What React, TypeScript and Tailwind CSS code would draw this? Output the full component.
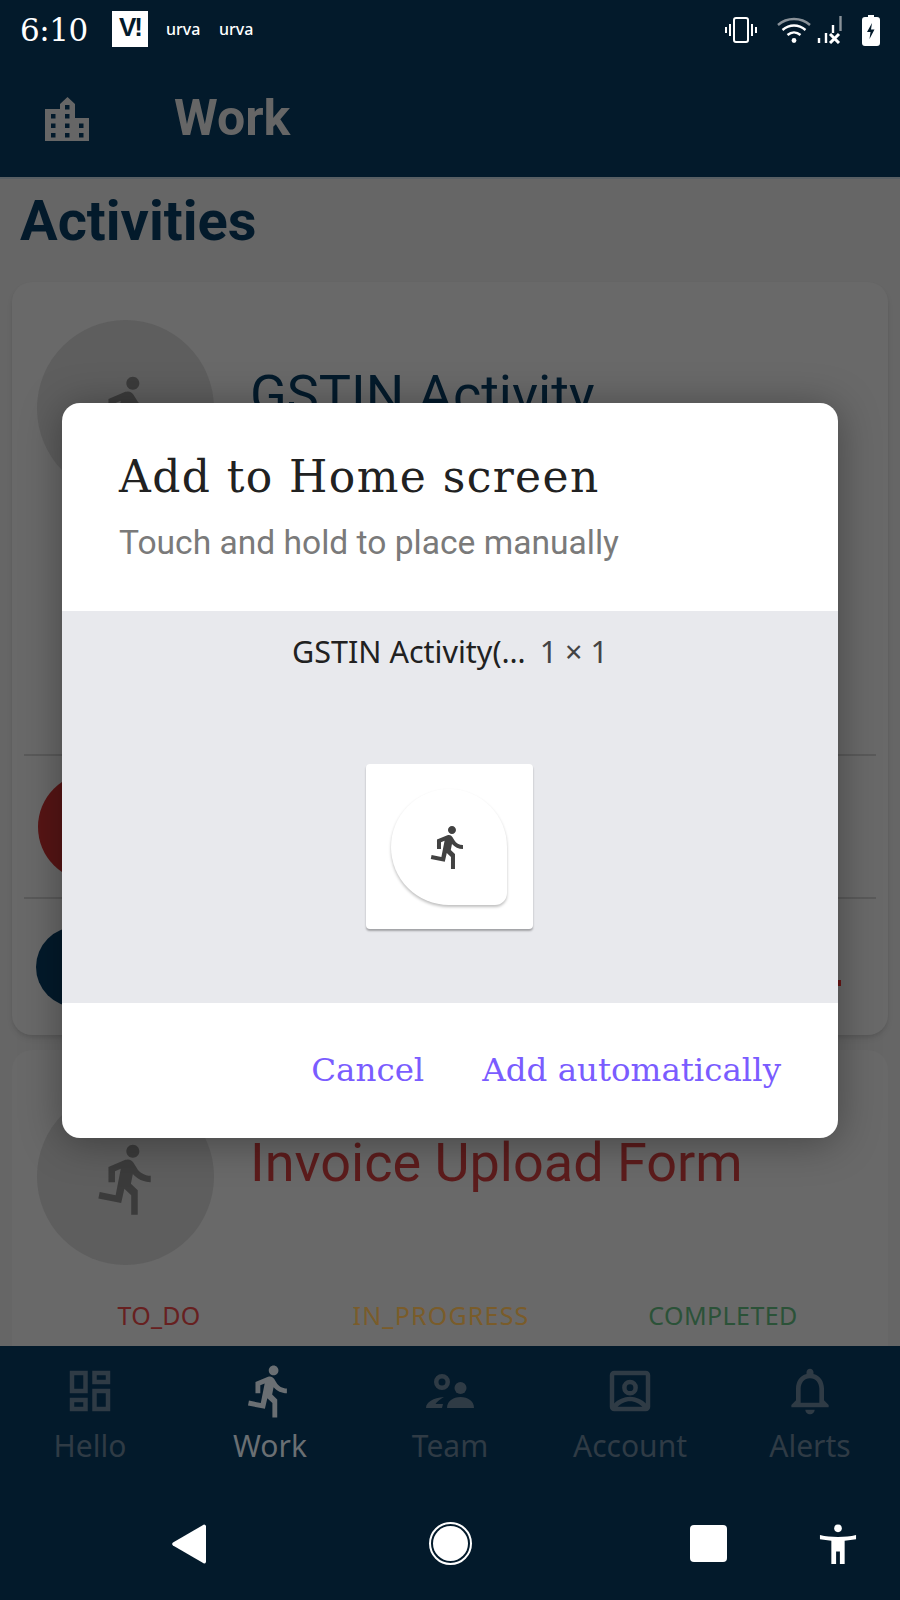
const RUN_PATH =
  "M13.49 5.48c1.1 0 2-.9 2-2s-.9-2-2-2-2 .9-2 2 .9 2 2 2zm-3.6 13.9l1-4.4 2.1 2v6h2v-7.5l-2.1-2 .6-3c1.3 1.5 3.3 2.5 5.5 2.5v-2c-1.9 0-3.5-1-4.3-2.4l-1-1.6c-.4-.6-1-1-1.7-1-.3 0-.5.1-.8.1l-5.2 2.2v4.7h2v-3.4l1.8-.7-1.6 8.1-4.9-1-.4 2 7 1.4z";

function RunIcon({ className }: { className: string }) {
  return (
    <svg viewBox="0 0 24 24" fill="currentColor" className={className}>
      <path d={RUN_PATH} />
    </svg>
  );
}

function BuildingIcon() {
  return (
    <svg viewBox="0 0 44 44" className="w-[44px] h-[44px] text-[#666]" fill="currentColor">
      <path
        fillRule="evenodd"
        d="M22.500 0L30 7v14h14v23H0V12h15V7zM20 8v4.500h4.500V8zM6 17v4.500h4.500V17zm14 0v4.500h4.500V17zM6 26.500V31h4.500v-4.500zm14 0V31h4.500v-4.500zm14 0V31h4.500v-4.500zM6 36v4.500h4.500V36zm14 0v4.500h4.500V36zm14 0v4.500h4.500V36z"
      />
    </svg>
  );
}

function StatusIcons() {
  return (
    <div className="flex items-center text-white">
      {/* vibrate */}
      <svg viewBox="0 0 32 26" className="w-[32px] h-[26px]" fill="none" stroke="currentColor" strokeWidth="2">
        <rect x="9" y="1" width="14" height="24" rx="2" />
        <path d="M5 7v12M1 10v6M27 7v12M31 10v6" />
      </svg>
      {/* wifi */}
      <svg viewBox="0 0 34 26" className="ml-[20px] w-[34px] h-[26px]" fill="none" stroke="currentColor" strokeWidth="2.4">
        <path d="M1 8C10 0 24 0 33 8" stroke="#8a9299" />
        <path d="M5.5 13c7-6 16-6 23 0M10.5 18c4-3.500 9-3.500 13 0" />
        <circle cx="17" cy="23.500" r="2.400" fill="currentColor" stroke="none" />
      </svg>
      {/* signal, no data */}
      <svg viewBox="0 0 26 28" className="ml-[6px] w-[26px] h-[28px]" fill="none" strokeWidth="2.400">
        <path d="M2 22v5M9 17v10M16 9v8" stroke="#fff" />
        <path d="M23.500 0v15" stroke="#8a9299" />
        <path d="M13 18l9 9M22 18l-9 9" stroke="#fff" strokeWidth="3" />
      </svg>
      {/* battery */}
      <svg viewBox="0 0 18 31" className="ml-[19px] w-[18px] h-[31px]">
        <path d="M6 0h6v2h3a3 3 0 0 1 3 3v23a3 3 0 0 1-3 3H3a3 3 0 0 1-3-3V5a3 3 0 0 1 3-3h3z" fill="#fff" />
        <path d="M10 8l-5 9h3.500l-1 7 5-9.500H9z" fill="#031a2b" />
      </svg>
    </div>
  );
}

function StatusBar() {
  return (
    <div className="h-[60px] pl-[20px] pr-[20px] flex items-center justify-between">
      <div className="flex items-center">
        <span className="w-[72px] text-[31px] leading-none text-white font-['DejaVu_Serif',serif] tracking-[-0.5px]">6:10</span>
        <div className="ml-[20px] mt-[-2px] w-[36px] h-[36px] bg-white flex items-start justify-center pt-[5px]">
          <span className="text-[26px] leading-[22px] font-bold text-[#031a2b] font-['Liberation_Sans',sans-serif] tracking-[-2px]">V!</span>
        </div>
        <span className="ml-[18px] mt-[-2px] w-[53px] text-[16px] leading-none font-medium text-white font-['Noto_Sans',sans-serif]">urva</span>
        <span className="mt-[-2px] text-[16px] leading-none font-medium text-white font-['Noto_Sans',sans-serif]">urva</span>
      </div>
      <StatusIcons />
    </div>
  );
}

function Stat({ label, className }: { label: string; className: string }) {
  return <span className={"text-[25px] font-['Noto_Sans',sans-serif] " + className}>{label}</span>;
}

function BackgroundCards() {
  return (
    <div className="flex-1 min-h-0 overflow-hidden bg-[#666] border-t-2 border-[#585f64]">
      <h2 className="pl-[20px] pt-[11px] h-[103px] text-[56px] leading-[62px] font-bold text-[#031a2b] font-['Roboto',sans-serif]">
        Activities
      </h2>
      <div className="mx-[12px] h-[753px] rounded-[20px] bg-[#696969] shadow-md">
        <div className="h-[472px] pt-[38px] pl-[25px] flex">
          <div className="w-[177px] h-[177px] rounded-full bg-[#5e5e5e] flex items-center justify-center">
            <RunIcon className="w-[78px] h-[78px] ml-[4px] mt-[4px] text-[#3b3b3b]" />
          </div>
          <p className="ml-[36px] mt-[37px] text-[54px] leading-[76px] text-[#031a2b] font-['Roboto',sans-serif]">GSTIN Activity</p>
        </div>
        <div className="mx-[12px] h-[143px] border-t-2 border-b-0 border-[#5a5a5a] flex items-center">
          <div className="ml-[14px] w-[108px] h-[108px] rounded-full bg-[#571515]" />
        </div>
        <div className="mx-[12px] h-[138px] border-t-2 border-[#5a5a5a] flex items-center justify-between">
          <div className="w-[80px] h-[80px] rounded-full bg-[#031a2b] ml-[12px]" />
          <div className="w-[3px] h-[6px] bg-[#6b1515] mr-[35px] mt-[32px]" />
        </div>
      </div>
      <div className="mt-[15px] mx-[12px] h-[400px] rounded-t-[20px] bg-[#696969]">
        <div className="pt-[38px] pl-[25px] flex">
          <div className="w-[177px] h-[177px] rounded-full bg-[#5e5e5e] flex items-center justify-center">
            <RunIcon className="w-[78px] h-[78px] ml-[4px] mt-[4px] text-[#3b3b3b]" />
          </div>
          <p className="ml-[36px] mt-[37px] text-[54px] leading-[76px] text-[#5c1c1c] font-['Roboto',sans-serif]">Invoice Upload Form</p>
        </div>
        <div className="mt-[32px] grid grid-cols-3 pl-[6px] pr-[24px] text-center">
          <Stat label="TO_DO" className="tracking-[0.2px] text-[#672020]" />
          <Stat label="IN_PROGRESS" className="tracking-[1.2px] text-[#7a5c2a]" />
          <Stat label="COMPLETED" className="tracking-[0.4px] text-[#2b5238]" />
        </div>
      </div>
    </div>
  );
}

function NavItem({ label, active, children }: { label: string; active?: boolean; children: React.ReactNode }) {
  return (
    <div className={"flex flex-col items-center " + (active ? "text-[#6a6f73]" : "text-[#2f3b45]")}>
      <div className="h-[56px] flex items-center justify-center">{children}</div>
      <span className="mt-[7px] text-[30px] leading-[40px] font-['Noto_Sans',sans-serif]">{label}</span>
    </div>
  );
}

function BottomNav() {
  return (
    <div className="h-[254px] pt-[17px]">
      <div className="grid grid-cols-5">
        <NavItem label="Hello">
          <svg viewBox="0 0 24 24" fill="currentColor" className="w-[54px] h-[54px]">
            <path d="M19 5v2h-4V5h4M9 5v6H5V5h4m10 8v6h-4v-6h4M9 17v2H5v-2h4M21 3h-8v6h8V3zM11 3H3v10h8V3zm10 8h-8v10h8V11zm-10 4H3v6h8v-6z" />
          </svg>
        </NavItem>
        <NavItem label="Work" active>
          <RunIcon className="w-[58px] h-[58px]" />
        </NavItem>
        <NavItem label="Team">
          <svg viewBox="8 8 64 56" fill="currentColor" className="w-[64px] h-[56px]">
            <path fillRule="evenodd" d="M32 19a8 8 0 1 1 0 16 8 8 0 0 1 0-16zm0 4.500a3.500 3.500 0 1 0 0 7 3.500 3.500 0 0 0 0-7z" />
            <circle cx="50.500" cy="33" r="6" />
            <path d="M37 53c0-7 6-11 13.500-11S64 46 64 53z" />
            <path d="M16 53c0-6 7-10 18-11-4 2.500-7 4.500-8.500 7H33l-1 4z" />
          </svg>
        </NavItem>
        <NavItem label="Account">
          <svg viewBox="0 0 24 24" fill="currentColor" className="w-[54px] h-[54px]">
            <path
              fillRule="evenodd"
              d="M5 3h14a2 2 0 0 1 2 2v14a2 2 0 0 1-2 2H5a2 2 0 0 1-2-2V5a2 2 0 0 1 2-2zm0 2v12.500c1.500-1.700 4.300-3 7-3s5.500 1.300 7 3V5zm7 2a3.500 3.500 0 1 1 0 7 3.500 3.500 0 0 1 0-7zm0 2a1.500 1.500 0 1 0 0 3 1.500 1.500 0 0 0 0-3zm-5.500 10h11c-1.200-1.400-3.300-2.500-5.500-2.500s-4.300 1.100-5.500 2.500z"
            />
          </svg>
        </NavItem>
        <NavItem label="Alerts">
          <svg viewBox="0 0 24 24" fill="currentColor" className="w-[56px] h-[56px]">
            <path d="M12 22c1.100 0 2-.9 2-2h-4c0 1.100.9 2 2 2zm6-6v-5c0-3.070-1.630-5.640-4.500-6.320V4c0-.83-.67-1.500-1.500-1.500s-1.500.67-1.500 1.500v.68C7.640 5.360 6 7.920 6 11v5l-2 2v1h16v-1l-2-2zm-2 1H8v-6c0-2.480 1.510-4.500 4-4.500s4 2.020 4 4.500v6z" />
          </svg>
        </NavItem>
      </div>
      <div className="mt-[56px] pl-[172px] flex items-center text-white">
        <svg viewBox="0 0 34 40" className="w-[34px] h-[40px]" fill="currentColor">
          <path d="M32 .5a2 2 0 0 1 2 1.500v36a2 2 0 0 1-2 1.500L1 21.500a2 2 0 0 1 0-3z" />
        </svg>
        <div className="ml-[223px] w-[43px] h-[43px] rounded-full border-2 border-white p-[2px]">
          <div className="w-full h-full rounded-full bg-white" />
        </div>
        <div className="ml-[218px] w-[37px] h-[37px] rounded-[4px] bg-white" />
        <svg viewBox="0 0 40 42" className="ml-[92px] w-[38px] h-[42px]" fill="currentColor">
          <circle cx="20" cy="4.500" r="4" />
          <path d="M1 11.500c6 1.500 12 2 19 2s13-.5 19-2v4.500l-12 1.500V42h-5V29h-4v13h-5V17.500L1 16z" />
        </svg>
      </div>
    </div>
  );
}

function AddWidgetDialog() {
  return (
    <div className="absolute left-[62px] top-[403px] w-[776px] h-[735px] rounded-[18px] bg-white overflow-hidden flex flex-col shadow-[0_4px_40px_rgba(0,0,0,0.35)]">
      <div className="h-[208px] pl-[57px] pt-[45px]">
        <h1 className="text-[44px] leading-[58px] tracking-[1.4px] text-[#212121] font-['DejaVu_Serif',serif]">Add to Home screen</h1>
        <p className="mt-[15px] text-[33.6px] leading-[44px] text-[#7a7a7a] font-['Roboto',sans-serif]">Touch and hold to place manually</p>
      </div>
      <div className="h-[392px] bg-[#e8e9ed] flex flex-col items-center">
        <p className="mt-[20px] text-[30.5px] leading-[40px] text-[#212121] font-['Noto_Sans',sans-serif]">
          GSTIN Activity(…<span className="ml-[14px] text-[#444]">1 × 1</span>
        </p>
        <div className="mt-[93px] mr-[2px] w-[167px] h-[165px] rounded-[4px] bg-white shadow-[0_2px_2px_rgba(0,0,0,0.3)] flex items-center justify-center">
          <div className="w-[116px] h-[116px] rounded-[58px] rounded-br-[12px] bg-white shadow-[0_2px_3px_rgba(0,0,0,0.25)] flex items-center justify-center">
            <RunIcon className="w-[48px] h-[48px] text-[#424242]" />
          </div>
        </div>
      </div>
      <div className="flex-1 flex items-center justify-end pr-[57px] gap-[58px] text-[32.5px] text-[#7a5cff] font-['DejaVu_Serif',serif]">
        <span>Cancel</span>
        <span>Add automatically</span>
      </div>
    </div>
  );
}

export default function App() {
  return (
    <div className="relative w-[900px] h-[1600px] overflow-hidden bg-[#031a2b] flex flex-col">
      <StatusBar />
      <div className="h-[117px] pl-[45px] flex items-center">
        <BuildingIcon />
        <span className="ml-[85px] text-[50px] font-bold text-[#666] font-['Roboto',sans-serif]">Work</span>
      </div>
      <BackgroundCards />
      <BottomNav />
      <AddWidgetDialog />
    </div>
  );
}
